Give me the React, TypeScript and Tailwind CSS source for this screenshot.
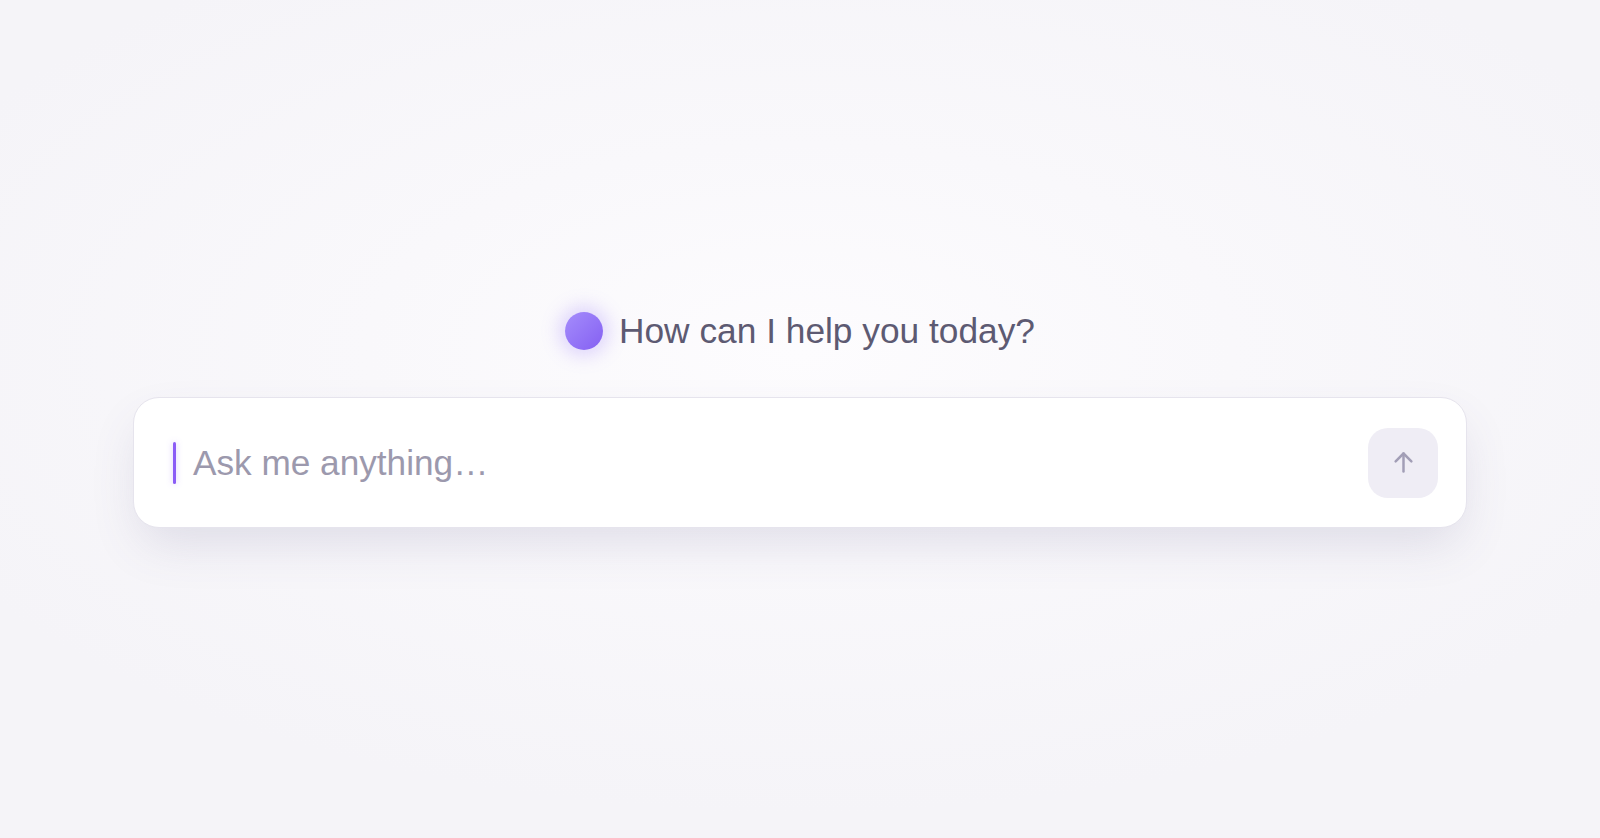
import React from "react";

export default function App() {
  return (
    <div
      className="w-full h-[838px] flex flex-col items-center justify-center bg-[#f6f5f9]"
      style={{
        fontFamily: '"Liberation Sans", Arial, sans-serif',
        backgroundImage:
          "radial-gradient(ellipse 60% 55% at 50% 42%, #fdfcfe 0%, #f9f8fb 45%, #f5f4f8 100%)",
      }}
    >
      <div className="flex items-center gap-[16px] h-[38px] mt-[2px]">
        <div className="w-[38px] h-[38px] rounded-full bg-gradient-to-br from-[#a58cfb] to-[#855ff2] shadow-[0_0_18px_6px_rgba(150,120,250,0.28)]" />
        <span className="text-[35.3px] leading-none text-[#5d5a72]">
          How can I help you today?
        </span>
      </div>
      <div className="mt-[47px] w-[1334px] h-[131px] bg-white rounded-[26px] border border-[#e6e4ed] shadow-[0_22px_50px_-8px_rgba(90,80,130,0.16)] flex items-center pl-[39px] pr-[28px]">
        <div className="w-[3px] h-[42px] rounded-full bg-[#8b5cf6] shadow-[0_0_6px_rgba(139,92,246,0.35)]" />
        <span className="ml-[17px] text-[35.2px] leading-none text-[#9c99ad] flex-1">
          Ask me anything…
        </span>
        <button className="w-[70px] h-[70px] rounded-[20px] bg-[#efedf5] flex items-center justify-center">
          <svg
            width="27"
            height="27"
            viewBox="0 0 24 24"
            fill="none"
            stroke="#a29eb6"
            strokeWidth="2.2"
            strokeLinecap="round"
            strokeLinejoin="round"
          >
            <path d="M12 20V4" />
            <path d="M5 11l7-7 7 7" />
          </svg>
        </button>
      </div>
    </div>
  );
}
